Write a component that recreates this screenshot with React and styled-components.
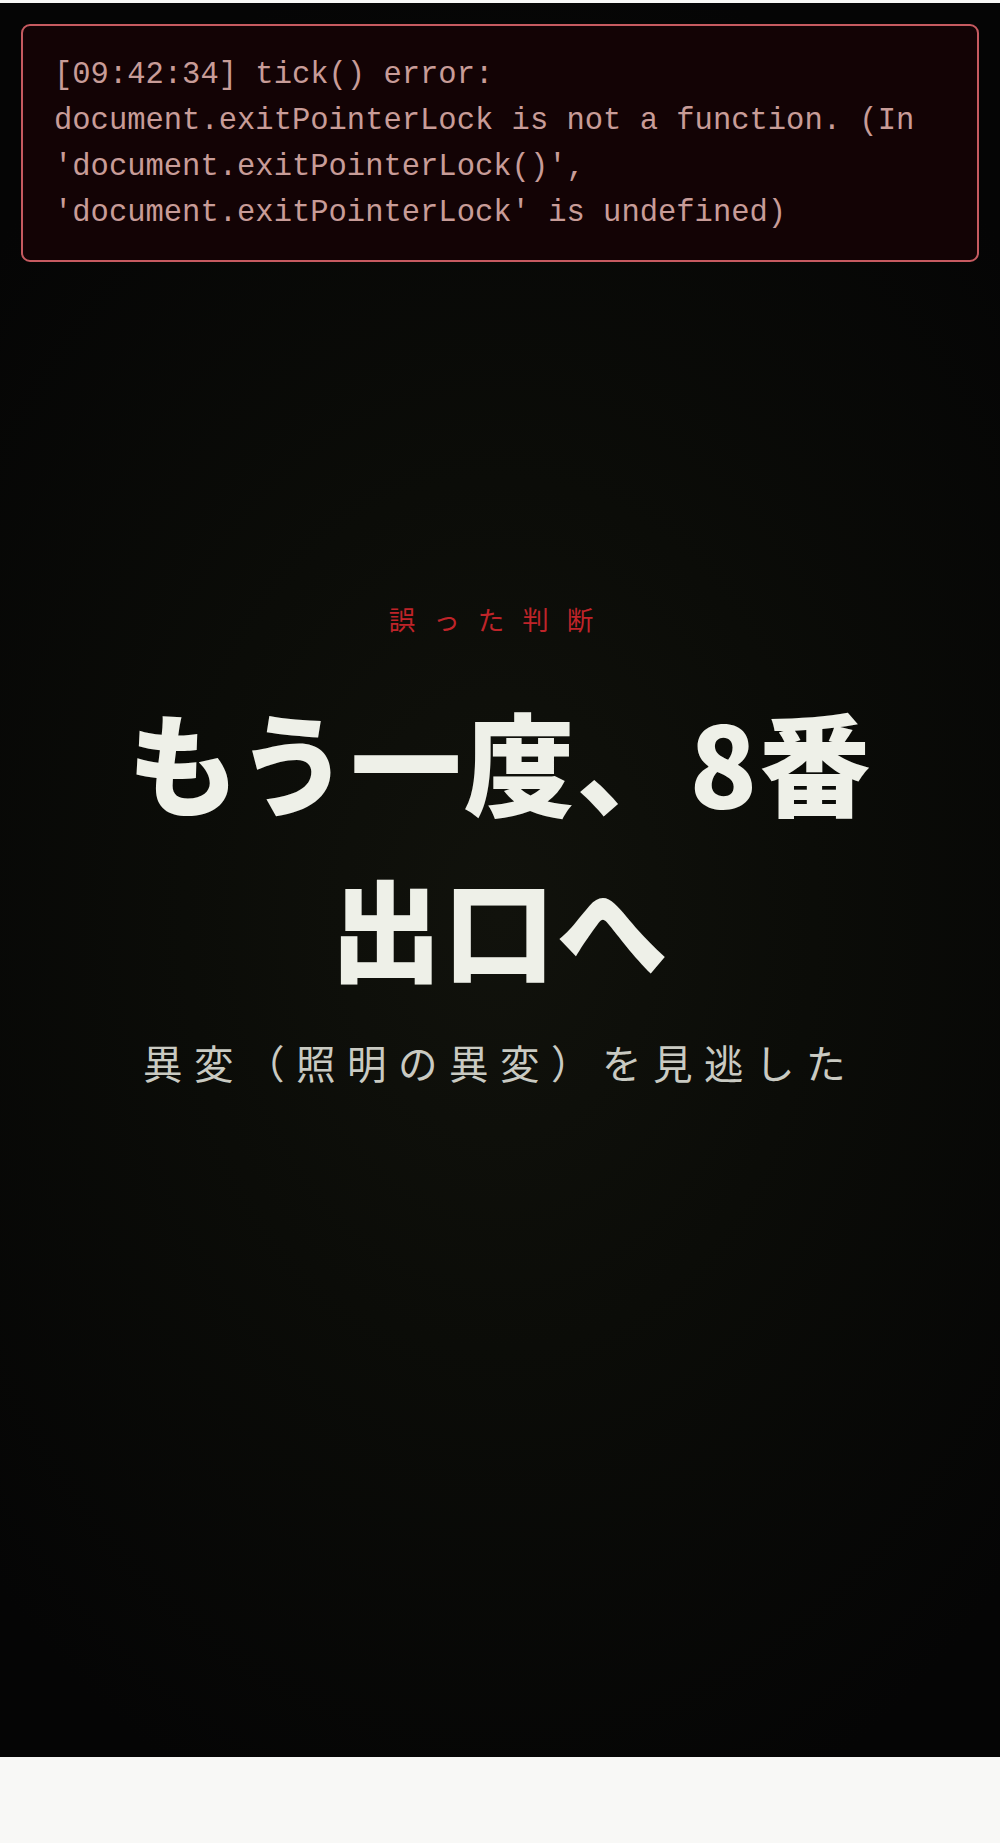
import styled, { createGlobalStyle } from 'styled-components';

const GlobalStyle = createGlobalStyle`
  html, body {
    margin: 0;
    padding: 0;
    background: #f8f8f6;
  }
  body {
    font-family: "Noto Sans CJK JP", "Noto Sans", sans-serif;
  }
`;

const Screen = styled.main`
  position: relative;
  margin-top: 3px;
  height: 1754px;
  box-sizing: border-box;
  padding-bottom: 70px;
  display: flex;
  flex-direction: column;
  align-items: center;
  justify-content: center;
  background: radial-gradient(ellipse 70% 55% at 50% 52%, #11120c 0%, #0b0c08 45%, #050505 100%);
  overflow: hidden;
`;

const ErrorLog = styled.pre`
  position: absolute;
  top: 21px;
  left: 21px;
  right: 21px;
  margin: 0;
  padding: 26px 31px 24px;
  border: 2px solid #c65a60;
  border-radius: 9px;
  background: #130305;
  color: #c89c98;
  font-family: "Liberation Mono", "Courier New", monospace;
  font-size: 30.5px;
  line-height: 46px;
  white-space: pre-wrap;
  word-break: normal;
`;

const Verdict = styled.div`
  color: #bf2429;
  font-size: 26.5px;
  line-height: 39px;
  letter-spacing: 18px;
`;

const Headline = styled.h1`
  margin: 39px 0 0;
  color: #eef0e8;
  font-size: 111px;
  font-weight: 900;
  line-height: 166px;
  letter-spacing: 2px;
  text-align: center;
`;

const Reason = styled.p`
  margin: 24px 0 0;
  color: #c9cac2;
  font-size: 39.5px;
  line-height: 58px;
  letter-spacing: 11.5px;
`;

export default function App() {
  return (
    <>
      <GlobalStyle />
      <Screen>
        <ErrorLog>
          [09:42:34] tick() error: document.exitPointerLock is not a function. (In 'document.exitPointerLock()', 'document.exitPointerLock' is undefined)
        </ErrorLog>
        <Verdict>誤った判断</Verdict>
        <Headline>
          もう一度、8番
          <br />
          出口へ
        </Headline>
        <Reason>異変（照明の異変）を見逃した</Reason>
      </Screen>
    </>
  );
}
